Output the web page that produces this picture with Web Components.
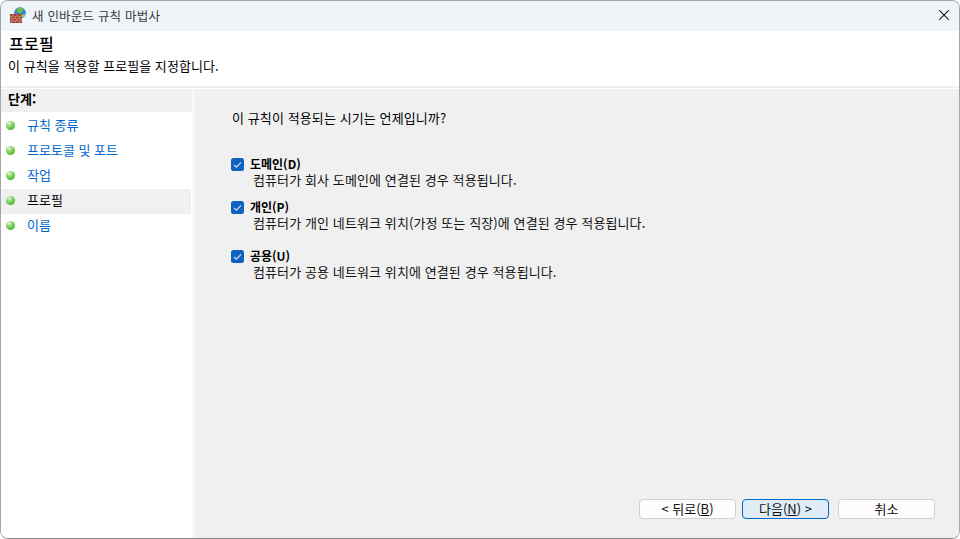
<!DOCTYPE html>
<html lang="ko">
<head>
<meta charset="utf-8">
<title>새 인바운드 규칙 마법사</title>
<style>
  html, body { margin: 0; height: 100%; background: #fff; overflow: hidden; }
  body { font: 13px "Noto Sans CJK KR", "Noto Sans", sans-serif; color: #000; }
</style>
</head>
<body>
<wizard-window>
  <title-bar slot="title">새 인바운드 규칙 마법사</title-bar>
  <wizard-header slot="header" heading="프로필">이 규칙을 적용할 프로필을 지정합니다.</wizard-header>
  <step-list slot="steps">
    <step-item>규칙 종류</step-item>
    <step-item>프로토콜 및 포트</step-item>
    <step-item>작업</step-item>
    <step-item current>프로필</step-item>
    <step-item>이름</step-item>
  </step-list>
  <profile-page slot="content">
    <profile-option label="도메인(D)" style="height:43px">컴퓨터가 회사 도메인에 연결된 경우 적용됩니다.</profile-option>
    <profile-option label="개인(P)" style="height:49px">컴퓨터가 개인 네트워크 위치(가정 또는 직장)에 연결된 경우 적용됩니다.</profile-option>
    <profile-option label="공용(U)">컴퓨터가 공용 네트워크 위치에 연결된 경우 적용됩니다.</profile-option>
  </profile-page>
</wizard-window>

<script>
class WizardWindow extends HTMLElement {
  constructor() {
    super();
    this.attachShadow({ mode: "open" });
    this.shadowRoot.innerHTML = `
      <style>
        :host {
          display: flex;
          flex-direction: column;
          box-sizing: border-box;
          width: 960px;
          height: 539px;
          background: #fff;
          border: 1px solid #a6a6a6;
          border-bottom-color: #8a8a8a;
          border-radius: 8px;
          overflow: hidden;
        }
        #rule { height: 2px; background: #efefef; flex: none; }
        #body {
          flex: 1;
          min-height: 0;
          display: grid;
          grid-template-columns: 191px 1fr;
          column-gap: 3px;
          background: #f7f7f7;
          border-top: 1px solid #fff;
        }
      </style>
      <slot name="title"></slot>
      <slot name="header"></slot>
      <div id="rule"></div>
      <div id="body">
        <slot name="steps"></slot>
        <slot name="content"></slot>
      </div>
    `;
  }
}

class TitleBar extends HTMLElement {
  constructor() {
    super();
    this.attachShadow({ mode: "open" });
    this.shadowRoot.innerHTML = `
      <style>
        :host {
          display: flex;
          align-items: center;
          box-sizing: border-box;
          height: 30px;
          background: #eff4f9;
          padding: 0 0 2px 9px;
          font-size: 12.5px;
          color: #3a3a3a;
        }
        svg.logo { width: 16px; height: 16px; margin-right: 6px; }
        #text { flex: 1; letter-spacing: .2px; }
        svg.close { width: 10px; height: 10px; margin-right: 10px; }
      </style>
      <svg class="logo" viewBox="0 0 16 16">
        <circle cx="10" cy="6" r="5.8" fill="#2f7fd8"/>
        <path d="M6.5 2c2-2 5.5-2 6.5 0 1 2-1 3-2 4-1 1-3 0-4-1z" fill="#6cc04a"/>
        <path d="M12 8c1-1 2.500-1.200 3.500-1.200-.5 2-1.800 3.700-3.500 4.200z" fill="#8fd06a"/>
        <path d="M0 7h12v9H0z" fill="#9c3f2a"/>
        <path d="M0 9.300h12M0 11.600h12M0 13.900h12M3 7v2.300M7 7v2.300M11 7v2.300M1.500 9.300v2.300M5.500 9.300v2.300M9.500 9.300v2.300M3 11.600v2.300M7 11.600v2.300M11 11.600v2.300M1.500 13.900V16M5.500 13.900V16M9.500 13.900V16" stroke="#d99c84" stroke-width=".7" fill="none"/>
      </svg>
      <span id="text"><slot></slot></span>
      <svg class="close" viewBox="0 0 10 10">
        <path d="M.3.3l9.4 9.4M9.7.3L.3 9.700" stroke="#1a1a1a" stroke-width="1.100" fill="none"/>
      </svg>
    `;
  }
}

class WizardHeader extends HTMLElement {
  constructor() {
    super();
    this.attachShadow({ mode: "open" });
    this.shadowRoot.innerHTML = `
      <style>
        :host {
          display: block;
          box-sizing: border-box;
          height: 55px;
          background: #fff;
          padding: 2px 0 0 8px;
        }
        h1 { margin: 0; font-size: 16px; font-weight: 500; line-height: 21px; letter-spacing: .3px; }
        p { margin: 3px 0 0 -1px; font-size: 13px; line-height: 17px; letter-spacing: .05px; }
      </style>
      <h1></h1>
      <p><slot></slot></p>
    `;
    this.shadowRoot.querySelector("h1").textContent = this.getAttribute("heading");
  }
}

class StepList extends HTMLElement {
  constructor() {
    super();
    this.attachShadow({ mode: "open" });
    this.shadowRoot.innerHTML = `
      <style>
        :host { display: block; background: #fff; }
        #title {
          height: 23px;
          line-height: 20px;
          padding-left: 7px;
          background: #f0f0f0;
          font-weight: 700;
          font-size: 13px;
        }
        #items { display: flex; flex-direction: column; padding-top: 2px; }
      </style>
      <div id="title">단계:</div>
      <div id="items"><slot></slot></div>
    `;
  }
}

class StepItem extends HTMLElement {
  constructor() {
    super();
    this.attachShadow({ mode: "open" });
    this.shadowRoot.innerHTML = `
      <style>
        :host {
          display: flex;
          align-items: center;
          box-sizing: border-box;
          height: 25px;
          margin-right: 1px;
          padding: 0 0 3px 5px;
          color: #0066cc;
          font-size: 13px;
        }
        :host([current]) { background: #f0f0f0; color: #000; }
        i {
          width: 9px;
          height: 9px;
          margin-right: 12px;
          border-radius: 50%;
          background: radial-gradient(circle at 35% 25%, #e4f3dc 0, #8fd672 35%, #4cb82e 75%, #6a9c5a 100%);
        }
        span { margin-bottom: 2px; }
      </style>
      <i></i><span><slot></slot></span>
    `;
  }
}

class ProfilePage extends HTMLElement {
  constructor() {
    super();
    this.attachShadow({ mode: "open" });
    this.shadowRoot.innerHTML = `
      <style>
        :host {
          display: flex;
          flex-direction: column;
          box-sizing: border-box;
          height: 100%;
          background: #f0f0f0;
          padding: 20px 0 0 36px;
        }
        #question { height: 46px; line-height: 18px; font-size: 13px; letter-spacing: .1px; margin-left: 1px; }
        #options { flex: 1; display: flex; flex-direction: column; }
        #buttons {
          display: flex;
          gap: 6px;
          padding: 0 24px 19px 408px;
        }
        wizard-button:last-child { margin-left: 3px; }
      </style>
      <div id="question">이 규칙이 적용되는 시기는 언제입니까?</div>
      <div id="options"><slot></slot></div>
      <div id="buttons">
        <wizard-button>&lt; 뒤로(<u>B</u>)</wizard-button>
        <wizard-button primary>다음(<u>N</u>) &gt;</wizard-button>
        <wizard-button>취소</wizard-button>
      </div>
    `;
  }
}

class ProfileOption extends HTMLElement {
  constructor() {
    super();
    this.attachShadow({ mode: "open" });
    this.shadowRoot.innerHTML = `
      <style>
        :host { display: grid; grid-template-columns: 20px 1fr; column-gap: 0; align-content: start; }
        svg { width: 13px; height: 13px; margin-top: 3px; }
        b { display: block; font-weight: 700; font-size: 12px; line-height: 16px; margin: 1px 0 0 -1px; }
        span { display: block; grid-column: 2; font-size: 13px; line-height: 15px; margin-left: 2px; color: #111; letter-spacing: .1px; }
      </style>
      <svg viewBox="0 0 13 13">
        <rect width="13" height="13" rx="2.500" fill="#0f62be"/>
        <path d="M3 6.800l2.400 2.400L10 4.400" stroke="#dbe9f7" stroke-width="1.100" fill="none"/>
      </svg>
      <b></b>
      <span><slot></slot></span>
    `;
    this.shadowRoot.querySelector("b").textContent = this.getAttribute("label");
  }
}

class WizardButton extends HTMLElement {
  constructor() {
    super();
    this.attachShadow({ mode: "open" });
    this.shadowRoot.innerHTML = `
      <style>
        :host {
          display: flex;
          align-items: center;
          justify-content: center;
          box-sizing: border-box;
          width: 97px;
          height: 20px;
          padding-bottom: 2px;
          background: #fdfdfd;
          border: 1px solid #d0d0d0;
          border-radius: 4px;
          font-size: 13px;
          color: #111;
        }
        :host([primary]) {
          width: 87px;
          background: #e0edf8;
          border-color: #0067c0;
        }
      </style>
      <slot></slot>
    `;
  }
}

customElements.define("wizard-window", WizardWindow);
customElements.define("title-bar", TitleBar);
customElements.define("wizard-header", WizardHeader);
customElements.define("step-list", StepList);
customElements.define("step-item", StepItem);
customElements.define("profile-page", ProfilePage);
customElements.define("profile-option", ProfileOption);
customElements.define("wizard-button", WizardButton);
</script>
</body>
</html>
